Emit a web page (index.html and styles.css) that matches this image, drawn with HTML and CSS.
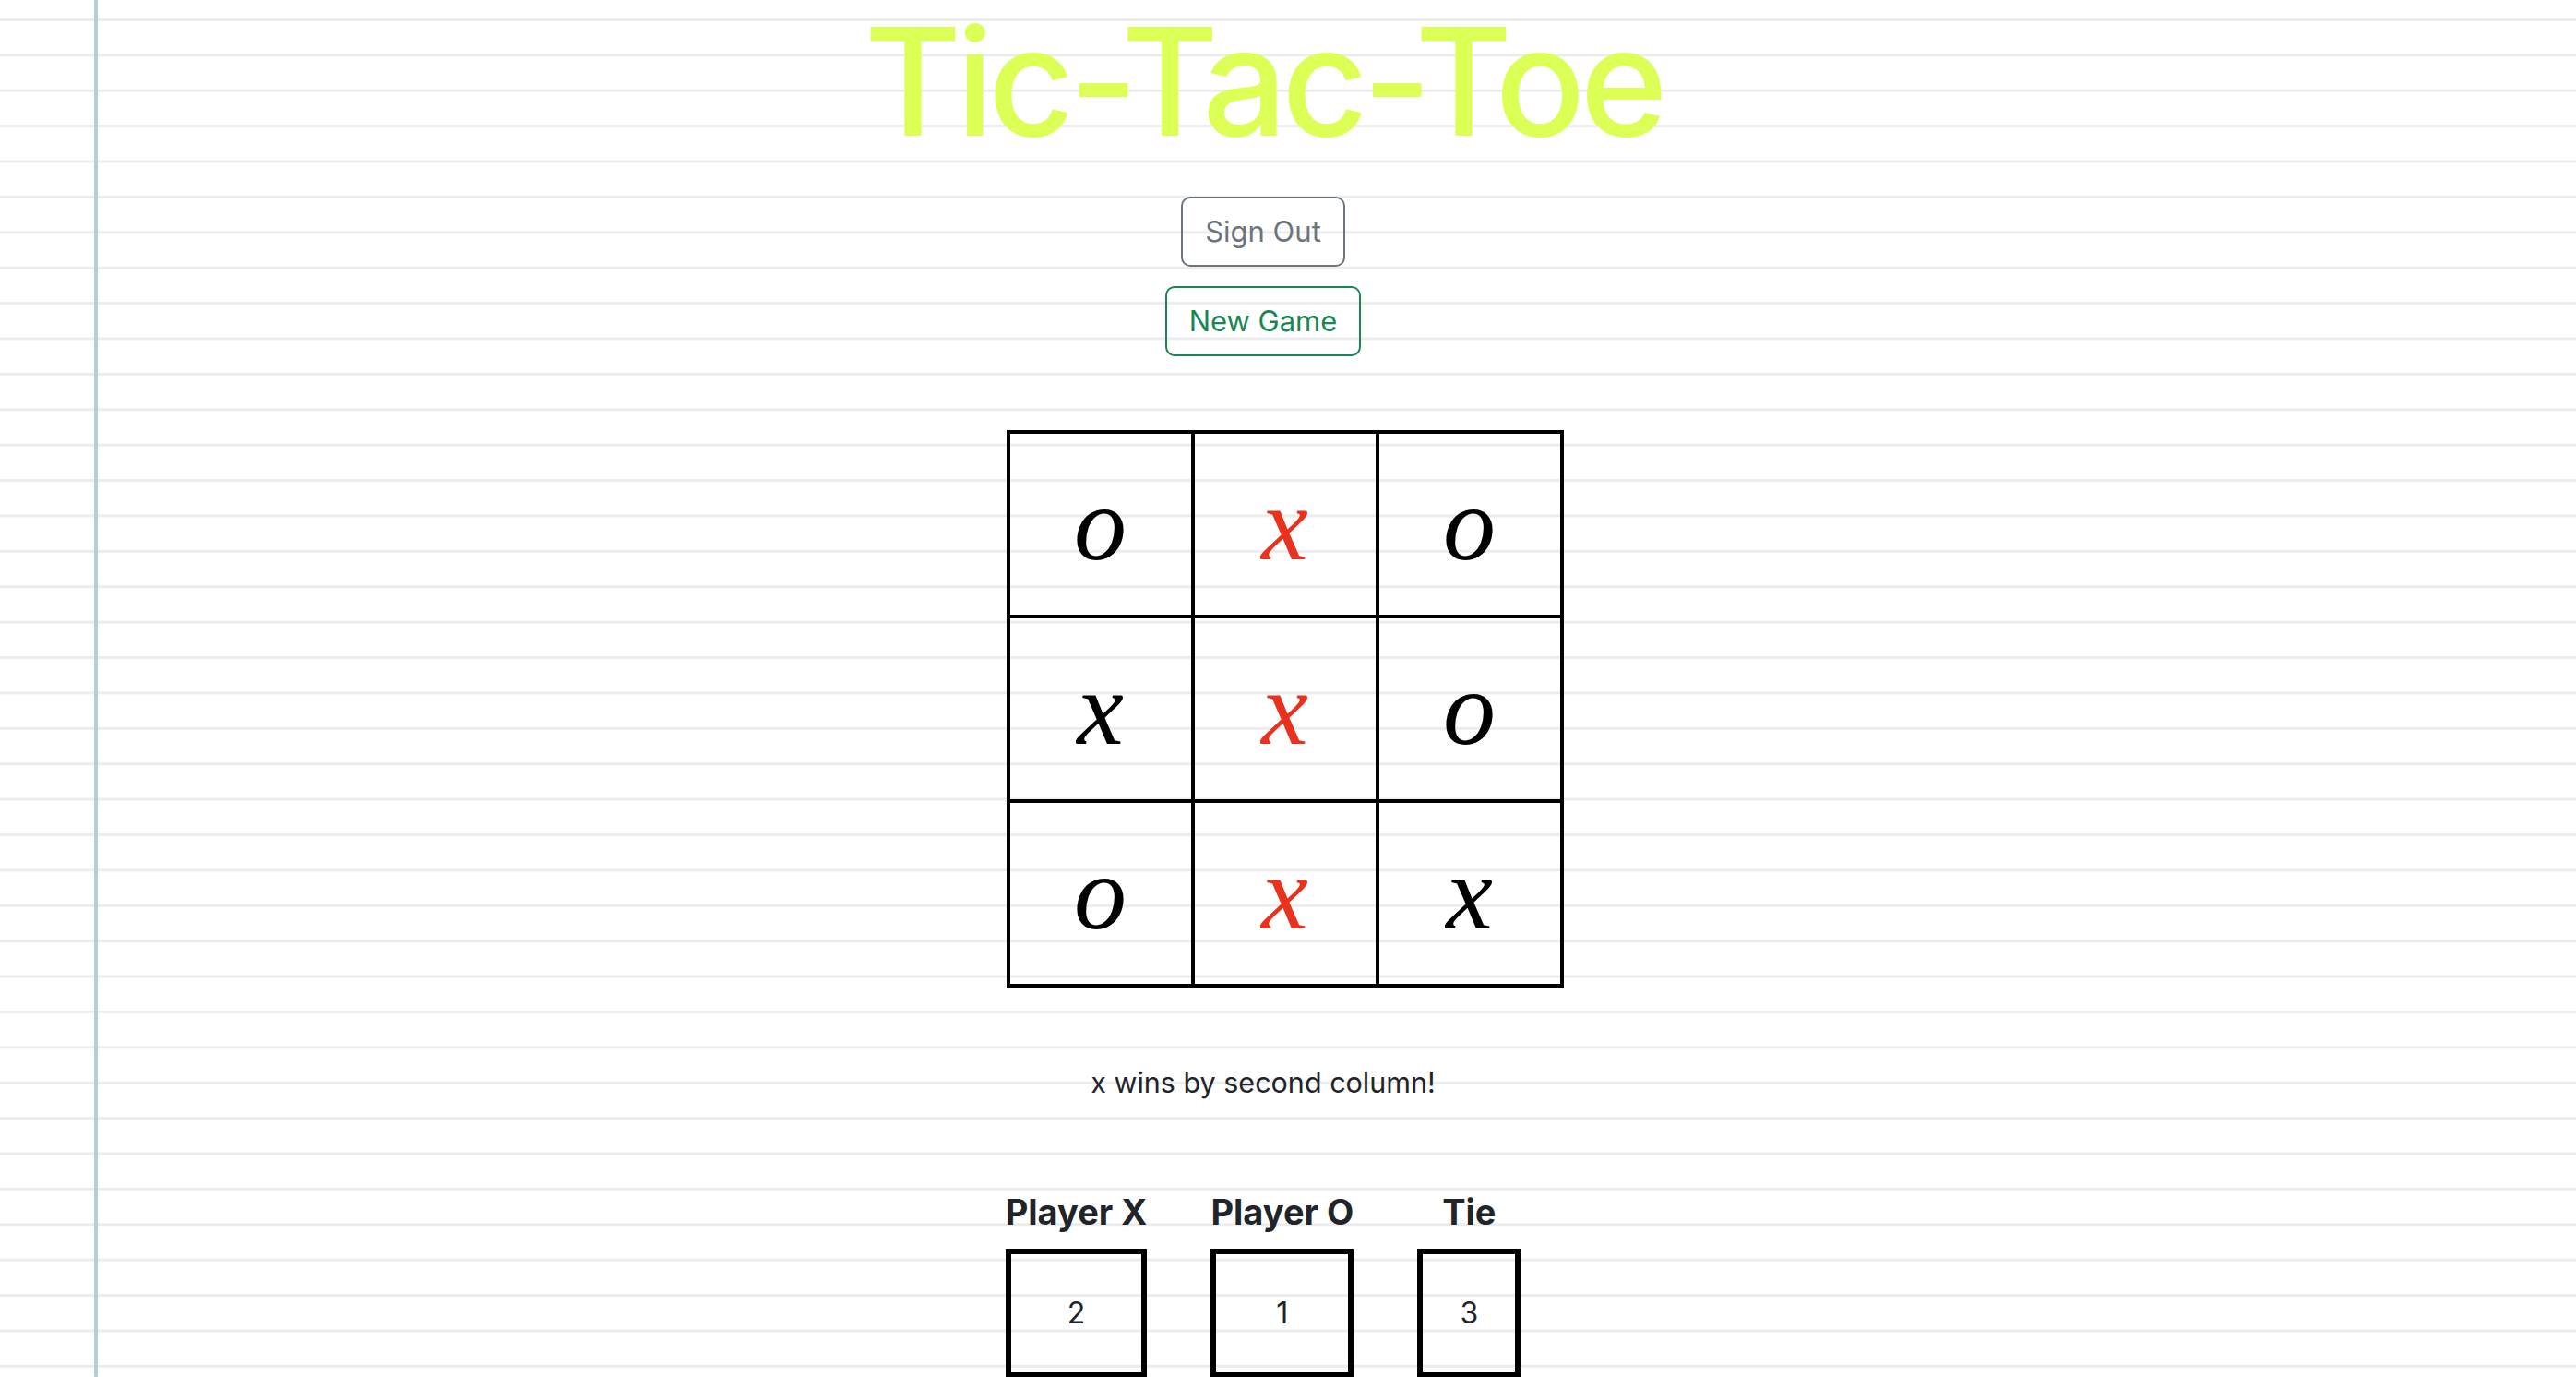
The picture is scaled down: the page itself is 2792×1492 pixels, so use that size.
FILE: index.html
```html
<!DOCTYPE html>
<html lang="en">
<head>
<meta charset="utf-8">
<title>Tic-Tac-Toe</title>
<link rel="stylesheet" href="styles.css">
</head>
<body>
<main class="page">
  <h1 class="title">Tic-Tac-Toe</h1>
  <div class="actions">
    <button class="btn btn-secondary" type="button">Sign Out</button>
    <button class="btn btn-success" type="button">New Game</button>
  </div>
  <div class="board">
    <div class="cell">o</div>
    <div class="cell win">x</div>
    <div class="cell">o</div>
    <div class="cell">x</div>
    <div class="cell win">x</div>
    <div class="cell">o</div>
    <div class="cell">o</div>
    <div class="cell win">x</div>
    <div class="cell">x</div>
  </div>
  <p class="status">x wins by second column!</p>
  <div class="scores">
    <div class="score">
      <h5 class="score-label">Player X</h5>
      <div class="score-box">2</div>
    </div>
    <div class="score">
      <h5 class="score-label">Player O</h5>
      <div class="score-box">1</div>
    </div>
    <div class="score">
      <h5 class="score-label">Tie</h5>
      <div class="score-box">3</div>
    </div>
  </div>
</main>
</body>
</html>
```

FILE: styles.css
```css
html, body {
  margin: 0;
  padding: 0;
}

body {
  min-height: 100vh;
  font-family: Inter, "Noto Sans", sans-serif;
  color: #212529;
  background-color: #fff;
  background-image:
    linear-gradient(90deg, transparent 102px, #b4cfd6 102px, #b4cfd6 106px, transparent 106px),
    linear-gradient(to bottom, #ececec 0, #ececec 3px, transparent 3px);
  background-size: 100% 100%, 100% 38.4px;
  background-position: 0 0, 0 20px;
  background-repeat: no-repeat, repeat;
}

.page {
  display: flex;
  flex-direction: column;
  align-items: center;
  padding: 5px 54px 0 0;
}

.title {
  margin: 0 0 42px;
  font-family: Inter, sans-serif;
  font-weight: 500;
  font-size: 162px;
  line-height: 166px;
  letter-spacing: -6px;
  color: #dcff55;
}

.actions {
  display: flex;
  flex-direction: column;
  align-items: center;
  gap: 21px;
}

.btn {
  font-family: Inter, sans-serif;
  font-size: 31px;
  line-height: 48px;
  font-weight: 400;
  padding: 12px 24px;
  border: 2px solid;
  border-radius: 10px;
  background: transparent;
}

.btn-secondary {
  color: #6c757d;
  border-color: #6c757d;
}

.btn-success {
  color: #198754;
  border-color: #198754;
}

.board {
  margin: 80px 0 0 47px;
  display: grid;
  grid-template-columns: repeat(3, 200px);
  grid-auto-rows: 200px;
  border-top: 4px solid #000;
  border-left: 4px solid #000;
}

.cell {
  box-sizing: border-box;
  border-right: 4px solid #000;
  border-bottom: 4px solid #000;
  display: flex;
  align-items: center;
  justify-content: center;
  font-family: "Liberation Serif", serif;
  font-style: italic;
  font-size: 114px;
  color: #000;
}

.cell.win {
  color: #e8321e;
}

.status {
  margin: 79px 0 0;
  font-size: 30.5px;
  line-height: 48px;
}

.scores {
  display: flex;
  gap: 69px;
  margin-top: 94px;
}

.score {
  display: flex;
  flex-direction: column;
  align-items: stretch;
}

.score-label {
  margin: 0 0 16px;
  font-weight: 700;
  font-size: 38px;
  line-height: 45.6px;
  text-align: center;
  letter-spacing: 0;
}

.score-box {
  box-sizing: border-box;
  min-width: 112px;
  height: 140px;
  border: 6px solid #000;
  display: flex;
  align-items: center;
  justify-content: center;
  font-size: 32px;
}
```
